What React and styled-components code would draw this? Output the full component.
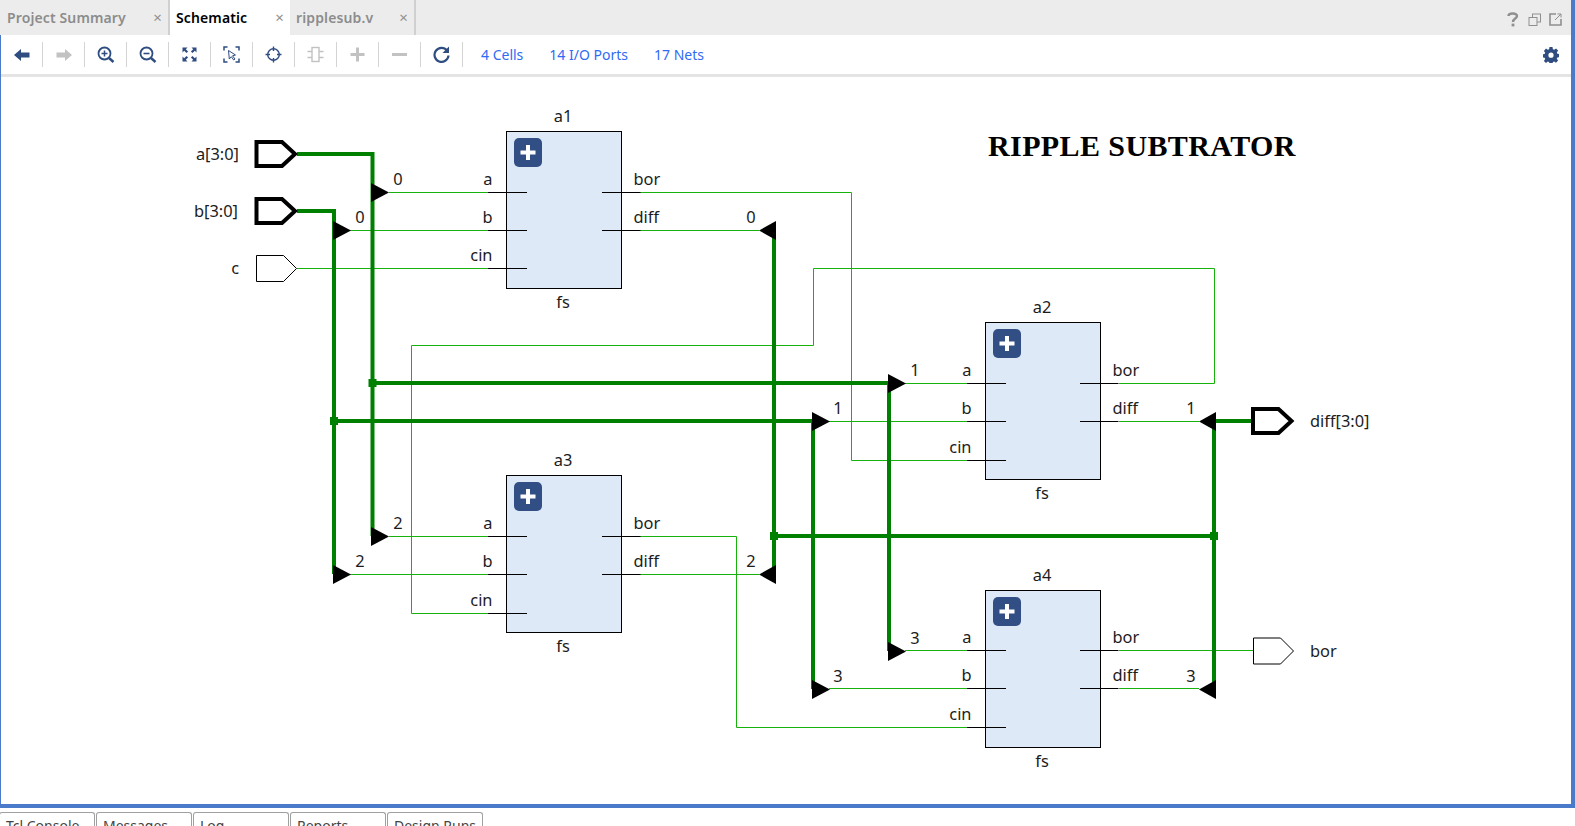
import React from "react";
import styled, { createGlobalStyle } from "styled-components";

const GlobalStyle = createGlobalStyle`
  html, body {
    margin: 0;
    padding: 0;
    background: #fff;
    overflow: hidden;
  }
`;

const UI_FONT = `"Noto Sans", "Open Sans", "Liberation Sans", sans-serif`;
const NAVY = "#2f4d80";
const OFF = "#c2c2c2";

const Page = styled.div`
  width: 1575px;
  height: 826px;
  display: flex;
  flex-direction: column;
  overflow: hidden;
  font-family: ${UI_FONT};
`;

const Window = styled.div`
  height: 808px;
  display: flex;
  flex-direction: column;
  box-sizing: border-box;
  border-right: 4px solid #4a7bcb;
  border-bottom: 4px solid #4a7bcb;
`;

const TabBar = styled.div`
  height: 35px;
  flex: none;
  display: flex;
  align-items: stretch;
  background: #ececec;
`;

const Tab = styled.div`
  width: ${(p) => p.$width}px;
  box-sizing: border-box;
  display: flex;
  align-items: center;
  justify-content: space-between;
  padding: 0 6px 0 ${(p) => p.$pad}px;
  font-size: 14px;
  font-weight: 600;
  letter-spacing: 0.12px;
  background: ${(p) => (p.$active ? "#fff" : "transparent")};
  color: ${(p) => (p.$active ? "#000" : "#8c8c8c")};
  border-right: ${(p) => (p.$edge ? "2px solid #d0d0d0" : "none")};
`;

const TabClose = styled.span`
  color: #8f8f8f;
  font-weight: 400;
  font-size: 15px;
  line-height: 1;
`;

const TabActions = styled.div`
  margin-left: auto;
  display: flex;
  align-items: center;
  gap: 8px;
  padding: 3px 9px 0 0;
`;

const Body = styled.div`
  flex: 1;
  min-height: 0;
  display: flex;
  flex-direction: column;
  border-left: 1px solid #4a7bcb;
`;

const Toolbar = styled.div`
  height: 39px;
  flex: none;
  display: flex;
  align-items: center;
  box-sizing: content-box;
  border-bottom: 3px solid #e4e4e4;
`;

const ToolButton = styled.div`
  width: 41px;
  height: 25px;
  flex: none;
  display: flex;
  align-items: center;
  justify-content: center;
  border-right: 1px solid #d4d4d4;
`;

const Stats = styled.div`
  display: flex;
  padding-left: 18px;
  gap: 26px;
`;

const StatLink = styled.span`
  color: #2f6bf5;
  font-size: 14px;
`;

const Gear = styled.div`
  margin-left: auto;
  padding-right: 12px;
  display: flex;
`;

const Canvas = styled.div`
  flex: 1;
  min-height: 0;
  background: #fff;
`;

const Drawing = styled.svg`
  display: block;
  width: 100%;
  height: 100%;
`;

const Label = styled.text`
  font-family: ${UI_FONT};
  font-size: 16.4px;
  fill: #1c1c1c;
`;

const Title = styled.text`
  font-family: "Liberation Serif", serif;
  font-size: 30px;
  font-weight: 700;
  letter-spacing: 0.4px;
  fill: #000;
`;

const BottomTabs = styled.div`
  flex: none;
  display: flex;
  gap: 1px;
  padding-top: 4px;
  margin-left: -1px;
`;

const BottomTab = styled.div`
  width: 96px;
  height: 30px;
  box-sizing: border-box;
  padding: 3px 0 0 6px;
  border: 1px solid #a0a0a0;
  border-bottom: none;
  border-radius: 3px 3px 0 0;
  font-size: 14px;
  color: #444;
`;

const Icon = ({ children, size = 18 }) => (
  <svg width={size} height={size} viewBox="0 0 18 18" fill="none">
    {children}
  </svg>
);

const toolIcons = [
  <Icon key="back"><path d="M1 9l7-6v3.5h8.5v5H8V15z" fill={NAVY} /></Icon>,
  <Icon key="forward"><path d="M17 9l-7-6v3.5H1.5v5H10V15z" fill={OFF} /></Icon>,
  <Icon key="zoomin">
    <circle cx="7.5" cy="7.5" r="6" stroke={NAVY} strokeWidth="1.8" />
    <path d="M4.5 7.5h6M7.5 4.5v6" stroke={NAVY} strokeWidth="1.5" />
    <path d="M12 12L16.5 16" stroke={NAVY} strokeWidth="2.4" />
  </Icon>,
  <Icon key="zoomout">
    <circle cx="7.5" cy="7.5" r="6" stroke={NAVY} strokeWidth="1.8" />
    <path d="M4.5 7.5h6" stroke={NAVY} strokeWidth="1.6" />
    <path d="M12 12L16.5 16" stroke={NAVY} strokeWidth="2.4" />
  </Icon>,
  <Icon key="fit">
    <path d="M1.5 1.5h5L4.8 3.2 7.1 5.5 5.5 7.1 3.2 4.8 1.5 6.5zM15.5 1.5v5l-1.7-1.7-2.3 2.3-1.6-1.6 2.3-2.3-1.7-1.7zM1.5 15.5v-5l1.7 1.7 2.3-2.3 1.6 1.6-2.3 2.3 1.7 1.7zM15.5 15.5h-5l1.7-1.7-2.3-2.3 1.6-1.6 2.3 2.3 1.7-1.7z" fill={NAVY} />
  </Icon>,
  <Icon key="fitsel">
    <path d="M1 4.5V1h3.5M12.5 1H16v3.5M1 12.5V16h3.5M12.5 16H16v-3.5" stroke={NAVY} strokeWidth="1.5" />
    <path d="M5.5 4.5l7 4.5-3 .8 2.5 3.2-1.3 1-2.4-3.3-2 2.3z" fill="#fff" stroke={NAVY} strokeWidth="1" />
  </Icon>,
  <Icon key="target">
    <circle cx="8.5" cy="8.5" r="5.8" stroke={NAVY} strokeWidth="1.4" />
    <path d="M8.5 .5V5M8.5 12v4.5M.5 8.5H5M12 8.5h4.5" stroke={NAVY} strokeWidth="1.4" />
  </Icon>,
  <Icon key="cell">
    <rect x="5" y="1.5" width="7" height="14" stroke={OFF} strokeWidth="1.4" />
    <path d="M.5 5.5H5M.5 11.5H5M12 5.5h4.5M12 11.5h4.5" stroke={OFF} strokeWidth="1.6" />
  </Icon>,
  <Icon key="plus"><path d="M8.5 1.5v14M1.5 8.5h14" stroke={OFF} strokeWidth="3" /></Icon>,
  <Icon key="minus"><path d="M1 8.5h15" stroke={OFF} strokeWidth="3" /></Icon>,
  <Icon key="refresh">
    <path d="M14 4.5A7 7 0 1 0 15.5 9.5" stroke={NAVY} strokeWidth="2.2" />
    <path d="M16 .5V7H9.5z" fill={NAVY} />
  </Icon>,
];

// rows are the y of the a, b and cin pins, tail is where the output pins start
const blocks = [
  { name: "a1", x: 506.5, y: 131, tail: 95.5, rows: [192.5, 230.5, 268.5] },
  { name: "a2", x: 985.5, y: 322, tail: 94.5, rows: [383.5, 421.5, 460.5] },
  { name: "a3", x: 506.5, y: 475, tail: 95.5, rows: [536.5, 574.5, 613.5] },
  { name: "a4", x: 985.5, y: 590, tail: 94.5, rows: [650.5, 688.5, 727.5] },
];

// thin single-bit nets
const nets = [
  "M389 192.5H488",
  "M350 230.5H488",
  "M297 268.5H488",
  "M640 192.5H851.5V460.5H967",
  "M640 230.5H759",
  "M1119 383.5H1214.5V268.5H813.5V345.5H411.5V613.5H488",
  "M905 383.5H967",
  "M829 421.5H967",
  "M1119 421.5H1199",
  "M389 536.5H488",
  "M350 574.5H488",
  "M640 536.5H736.5V727.5H967",
  "M640 574.5H759",
  "M905 650.5H967",
  "M829 688.5H967",
  "M1119 650.5H1253",
  "M1119 688.5H1199",
];

// four-bit buses
const buses = [
  "M297 154H372.5V536",
  "M297 211H334V574",
  "M372.5 383H889V651",
  "M334 421H813V689",
  "M774 230V574",
  "M774 536H1214",
  "M1214 421V689",
  "M1214 421H1253",
];

const joints = [
  [372.5, 383],
  [334, 421],
  [774, 536],
  [1214, 536],
];

// [x of the bus, y, bit label, label x, label baseline]
const rippers = [
  [372, 192, "0", 398, 185],
  [334, 230, "0", 360, 223],
  [372, 536, "2", 398, 529],
  [334, 574, "2", 360, 567],
  [889, 383, "1", 915, 376],
  [813, 421, "1", 838, 414],
  [889, 651, "3", 915, 644],
  [813, 689, "3", 838, 682],
];

const tappers = [
  [776, 230, "0", 751, 223],
  [776, 574, "2", 751, 567],
  [1216, 421, "1", 1191, 414],
  [1216, 689, "3", 1191, 682],
];

const Port = ({ x, y, bold }) => {
  const w = bold ? 38.5 : 40;
  const h = bold ? 12 : 13;
  return (
    <polygon
      points={`${x},${y - h} ${x + w - 13},${y - h} ${x + w},${y} ${x + w - 13},${y + h} ${x},${y + h}`}
      fill="#fff"
      stroke="#000"
      strokeWidth={bold ? 4 : 1}
    />
  );
};

const Block = ({ name, x, y, tail, rows }) => {
  const cx = x + 56.5;
  return (
    <g>
      <Label x={cx} y={y - 9} textAnchor="middle">{name}</Label>
      <rect x={x} y={y + 0.5} width={115} height={157} fill="#dee9f7" stroke="#000" />
      <rect x={x + 7.5} y={y + 7} width={28} height={29} rx={5} fill="#324f85" />
      <path d={`M${x + 21.5} ${y + 14}v15M${x + 14} ${y + 21.5}h15`} stroke="#fff" strokeWidth="4" />
      {["a", "b", "cin"].map((pin, i) => (
        <g key={pin}>
          <path d={`M${x - 18.5} ${rows[i]}h39`} stroke="#000" />
          <Label x={x - 14} y={rows[i] - 8} textAnchor="end">{pin}</Label>
        </g>
      ))}
      {["bor", "diff"].map((pin, i) => (
        <g key={pin}>
          <path d={`M${x + tail} ${rows[i]}h38.5`} stroke="#000" />
          <Label x={x + 127} y={rows[i] - 8}>{pin}</Label>
        </g>
      ))}
      <Label x={cx} y={y + 176.5} textAnchor="middle">fs</Label>
    </g>
  );
};

const App = () => (
  <Page>
    <GlobalStyle />
    <Window>
      <TabBar>
        <Tab $width={170} $pad={7} $edge>
          Project Summary <TabClose>×</TabClose>
        </Tab>
        <Tab $width={120} $pad={6} $active>
          Schematic <TabClose>×</TabClose>
        </Tab>
        <Tab $width={126} $pad={6} $edge>
          ripplesub.v <TabClose>×</TabClose>
        </Tab>
        <TabActions>
          <svg width="14" height="16" viewBox="0 0 14 16" fill="none">
            <path d="M2.5 5C2.5 2 11 1.5 11 5c0 2.6-4 2.6-4 6" stroke="#8f8f8f" strokeWidth="2.4" />
            <rect x="5.6" y="12.6" width="2.8" height="2.8" fill="#8f8f8f" />
          </svg>
          <svg width="13" height="13" viewBox="0 0 13 13" fill="none">
            <rect x="4.5" y="1" width="8" height="8" stroke="#8f8f8f" />
            <rect x="1" y="4.5" width="8" height="8" fill="#ececec" stroke="#8f8f8f" />
          </svg>
          <svg width="13" height="13" viewBox="0 0 13 13" fill="none">
            <path d="M7 1H1v11h11V6" stroke="#8f8f8f" strokeWidth="1.6" />
            <path d="M6 7l6-6M8.5 1H12v3.5" stroke="#8f8f8f" />
          </svg>
        </TabActions>
      </TabBar>
      <Body>
        <Toolbar>
          {toolIcons.map((icon) => (
            <ToolButton key={icon.key}>{icon}</ToolButton>
          ))}
          <Stats>
            <StatLink>4 Cells</StatLink>
            <StatLink>14 I/O Ports</StatLink>
            <StatLink>17 Nets</StatLink>
          </Stats>
          <Gear>
            <svg width="16" height="16" viewBox="0 0 16 16">
              <path
                fillRule="evenodd"
                d="M6.5 0h3l.4 2.2 1.3.6L13 1.5l2.1 2.1-1.3 1.8.6 1.3 2.2.4v3l-2.2.4-.6 1.3 1.3 1.8-2.1 2.1-1.8-1.3-1.3.6-.4 2.2h-3l-.4-2.2-1.3-.6L3 16l-2.1-2.1 1.3-1.8-.6-1.3L-.6 10.4v-3l2.2-.4.6-1.3-1.3-1.8L3 1.5l1.8 1.3 1.3-.6zM8 5.6a2.6 2.6 0 1 0 0 5.2 2.6 2.6 0 0 0 0-5.2z"
                fill="#2f4d80"
              />
            </svg>
          </Gear>
        </Toolbar>
        <Canvas>
          <Drawing viewBox="1 77 1570 727" preserveAspectRatio="xMinYMin meet">
            <Title x={988} y={156}>RIPPLE SUBTRATOR</Title>
            {nets.map((d) => (
              <path key={d} d={d} fill="none" stroke="#17b30c" strokeWidth="1" />
            ))}
            {buses.map((d) => (
              <path key={d} d={d} fill="none" stroke="#008000" strokeWidth="4" />
            ))}
            {joints.map(([x, y]) => (
              <rect key={`${x}-${y}`} x={x - 4} y={y - 4} width={8} height={8} fill="#008000" />
            ))}
            {blocks.map((b) => (
              <Block key={b.name} {...b} />
            ))}
            {rippers.map(([x, y, bit, lx, ly]) => (
              <g key={`${x}-${y}`}>
                <polygon points={`${x - 1},${y - 9} ${x + 17},${y + 0.5} ${x - 1},${y + 10}`} fill="#000" />
                <Label x={lx} y={ly} textAnchor="middle">{bit}</Label>
              </g>
            ))}
            {tappers.map(([x, y, bit, lx, ly]) => (
              <g key={`${x}-${y}`}>
                <polygon points={`${x},${y - 9} ${x - 17},${y + 0.5} ${x},${y + 10}`} fill="#000" />
                <Label x={lx} y={ly} textAnchor="middle">{bit}</Label>
              </g>
            ))}
            <Port x={256.5} y={154} bold />
            <Port x={256.5} y={211} bold />
            <Port x={256.5} y={268.5} />
            <Port x={1253} y={421} bold />
            <Port x={1253.5} y={651} />
            <Label x={239} y={160} textAnchor="end">a[3:0]</Label>
            <Label x={238} y={217} textAnchor="end">b[3:0]</Label>
            <Label x={239} y={274} textAnchor="end">c</Label>
            <Label x={1310} y={427}>diff[3:0]</Label>
            <Label x={1310} y={657}>bor</Label>
          </Drawing>
        </Canvas>
      </Body>
    </Window>
    <BottomTabs>
      <BottomTab>Tcl Console</BottomTab>
      <BottomTab>Messages</BottomTab>
      <BottomTab>Log</BottomTab>
      <BottomTab>Reports</BottomTab>
      <BottomTab>Design Runs</BottomTab>
    </BottomTabs>
  </Page>
);

export default App;
